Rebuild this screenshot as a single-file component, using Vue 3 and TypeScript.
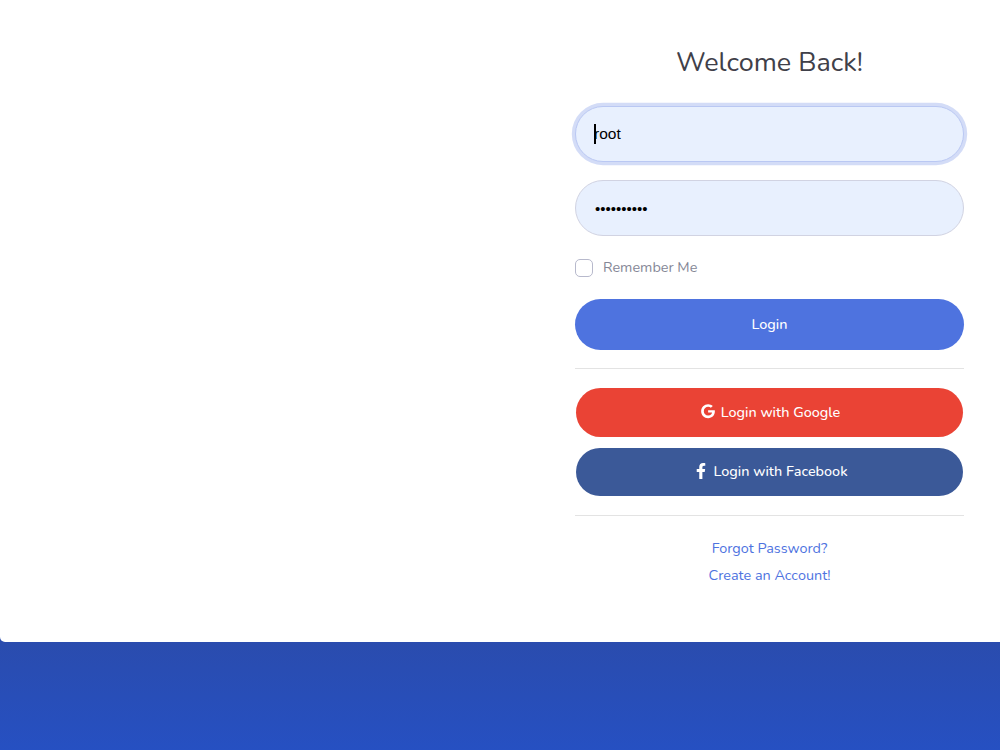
<script setup lang="ts">
const username = 'root'
const password = 'secret-key'
</script>

<template>
  <div class="page">
    <main class="card">
      <div class="aside"></div>
      <section class="panel">
        <h1 class="title">Welcome Back!</h1>
        <form class="form" @submit.prevent>
          <div class="field-wrap">
            <input class="field focused" type="text" :value="username" readonly />
            <span class="caret"></span>
          </div>
          <input class="field second" type="password" :value="password" readonly />
          <label class="remember">
            <input class="check" type="checkbox" />
            <span>Remember Me</span>
          </label>
          <button class="btn primary" type="button">Login</button>
          <hr class="rule first" />
          <button class="btn google" type="button">
            <svg class="icon" viewBox="0 0 488 512" aria-hidden="true"><path fill="currentColor" d="M488 261.8C488 403.3 391.1 504 248 504 110.8 504 0 393.2 0 256S110.8 8 248 8c66.8 0 123 24.5 166.3 64.9l-67.5 64.9C258.5 52.6 94.3 116.6 94.3 256c0 86.5 69.1 156.6 153.7 156.6 98.2 0 135-70.4 140.8-106.9H248v-85.3h236.1c2.3 12.7 3.9 24.9 3.9 41.4z"/></svg>
            <span>Login with Google</span>
          </button>
          <button class="btn facebook" type="button">
            <svg class="icon tall" viewBox="0 0 320 512" aria-hidden="true"><path fill="currentColor" d="M279.14 288l14.22-92.66h-88.91v-60.13c0-25.35 12.42-50.06 52.24-50.06h40.42V6.26S260.43 0 225.36 0c-73.22 0-121.08 44.38-121.08 124.72v70.62H22.89V288h81.39v224h100.17V288z"/></svg>
            <span>Login with Facebook</span>
          </button>
          <hr class="rule last" />
        </form>
        <nav class="links">
          <a href="#" @click.prevent>Forgot Password?</a>
          <a href="#" @click.prevent>Create an Account!</a>
        </nav>
      </section>
    </main>
  </div>
</template>

<style>
html, body { margin: 0; overflow: hidden; }
</style>

<style scoped>
.page {
  height: 750px;
  overflow: hidden;
  background: linear-gradient(180deg, #2a4cae 642px, #2650c2 750px);
  font-family: "Nunito", "Lato", "Open Sans", sans-serif;
}
.card {
  display: grid;
  grid-template-columns: 540px 460px;
  height: 642px;
  background: #fff;
  border-radius: 0 0 0 5px;
}
.panel {
  display: flex;
  flex-direction: column;
  padding: 43px 36px 0 35px;
}
.title {
  margin: 0 0 23px;
  text-align: center;
  font-size: 27px;
  line-height: 40px;
  font-weight: 400;
  color: #3f4049;
}
.form { display: flex; flex-direction: column; }
.field-wrap { position: relative; display: flex; }
.field {
  box-sizing: border-box;
  width: 100%;
  height: 56px;
  padding: 0 18px;
  border: 1px solid #d1d3e2;
  border-radius: 28px;
  background: #e8f0fe;
  color: #000;
  font: 15.5px "Liberation Sans", Arial, sans-serif;
  outline: none;
}
.focused {
  border-color: #bac8f3;
  box-shadow: 0 0 0 3.2px rgba(78, 115, 223, 0.25);
}
.second { margin-top: 18px; padding-left: 19px; font-size: 15px; }
.caret {
  position: absolute;
  left: 19px;
  top: 18px;
  width: 2px;
  height: 20px;
  background: #000;
}
.remember {
  display: flex;
  align-items: center;
  gap: 10px;
  margin-top: 23px;
  height: 18px;
  font-size: 14.4px;
  color: #858796;
}
.remember span { margin-top: -2px; }
.check {
  appearance: none;
  box-sizing: border-box;
  width: 18px;
  height: 18px;
  margin: 0;
  border: 1px solid #b7b9cc;
  border-radius: 5px;
  background: #fff;
}
.btn {
  display: flex;
  align-items: center;
  justify-content: center;
  gap: 4px;
  border: 0;
  color: #fff;
  font-family: inherit;
  font-size: 14.4px;
  font-weight: 500;
  padding: 0 0 2px;
}
.primary {
  height: 51px;
  margin-top: 22px;
  border-radius: 26px;
  background: #4e73df;
}
.google, .facebook { margin: 0 1px; border-radius: 25px; }
.google { height: 49px; background: #ea4335; }
.facebook { height: 48px; margin-top: 11px; background: #3b5998; }
.icon { width: 18px; height: 14.4px; display: block; }
.icon.tall { height: 16px; }
.rule { width: 100%; margin: 0; border: 0; border-top: 1px solid #e3e3e3; }
.rule.first { margin-top: 18px; margin-bottom: 19px; }
.rule.last { margin-top: 19px; }
.links {
  display: flex;
  flex-direction: column;
  align-items: center;
  gap: 7px;
  margin-top: 22px;
  font-size: 14.4px;
  line-height: 20px;
}
.links a { color: #4e73df; text-decoration: none; }
</style>
